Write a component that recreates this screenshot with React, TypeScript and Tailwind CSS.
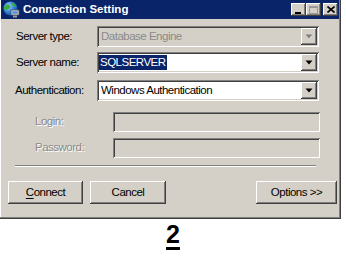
import React from "react";

// classic 3D bevels
const sunken =
  "shadow-[inset_1px_1px_#808080,inset_-1px_-1px_#ffffff,inset_2px_2px_#404040,inset_-2px_-2px_#d4d0c8]";
const raised =
  "shadow-[inset_-1px_-1px_#404040,inset_1px_1px_#ffffff,inset_-2px_-2px_#808080,inset_2px_2px_#d4d0c8]";

function DropButton({ disabled }: { disabled?: boolean }) {
  return (
    <div className={`w-[16px] h-[17px] mr-[2px] bg-[#d4d0c8] flex items-center justify-center ${raised}`}>
      <svg width="8" height="5" viewBox="0 0 8 5">
        {disabled && <path d="M2 2h5L4.5 4.5z" fill="#ffffff" />}
        <path d="M0.5 0.5h7L4 4.5z" fill={disabled ? "#808080" : "#000000"} />
      </svg>
    </div>
  );
}

function TitleButton({ children }: { children: React.ReactNode }) {
  return (
    <div className={`w-[15px] h-[13px] bg-[#d4d0c8] flex items-center justify-center ${raised}`}>
      {children}
    </div>
  );
}

function Globe() {
  return (
    <svg width="17" height="17" viewBox="0 0 17 17">
      <defs>
        <radialGradient id="g" cx="0.35" cy="0.35" r="0.7">
          <stop offset="0" stopColor="#9fd4ff" />
          <stop offset="0.6" stopColor="#2f7fd8" />
          <stop offset="1" stopColor="#164c9e" />
        </radialGradient>
      </defs>
      <circle cx="7.5" cy="7.5" r="7" fill="url(#g)" />
      <path d="M3 4c2-1 3 0 4 1s-1 3-2 3-2 1-2 3c-1-1-2-3-2-4s1-2 2-3z" fill="#3fae3a" />
      <path d="M9 2c2 0 4 2 4 4-1 0-2-1-3-1s-1-2-1-3z" fill="#3fae3a" />
      <rect x="8" y="9" width="8" height="5" fill="#d8d8d8" stroke="#505050" strokeWidth="0.8" />
      <rect x="9.2" y="10.2" width="5.6" height="2.6" fill="#5a8fd6" />
      <rect x="10" y="14.5" width="4" height="2" fill="#9a9a9a" />
    </svg>
  );
}

export default function App() {
  return (
    <div className="w-[346px] h-[266px] bg-white overflow-hidden font-['Liberation_Sans',sans-serif] text-[11.5px] tracking-[-0.5px] text-black">
      <div className="w-[341px] h-[219px] bg-[#d4d0c8] flex flex-col pl-[1px] pr-[2px] shadow-[inset_-1px_-1px_#404040,inset_-2px_-2px_#808080,inset_1px_0_#ffffff]">
        {/* title bar */}
        <div className="h-[19px] bg-[#0a246a] flex items-center pl-[2px] pr-[1px]">
          <Globe />
          <span className="ml-[3px] text-white font-bold text-[11.5px] tracking-normal leading-none">
            Connection Setting
          </span>
          <div className="ml-auto flex">
            <TitleButton>
              <div className="w-[6px] h-[2px] bg-black mt-[6px] -ml-[1px]" />
            </TitleButton>
            <TitleButton>
              <div className="w-[9px] h-[8px] border border-[#808080] border-t-2 opacity-70" />
            </TitleButton>
            <div className="ml-[2px]">
              <TitleButton>
                <svg width="8" height="7" viewBox="0 0 8 7">
                  <path d="M0.5 0.5l7 6M7.5 0.5l-7 6" stroke="#000" strokeWidth="1.6" />
                </svg>
              </TitleButton>
            </div>
          </div>
        </div>

        {/* server type */}
        <div className="flex items-center mt-[7px]">
          <div className="w-[81px] ml-[15px]">Server type:</div>
          <div className={`w-[222px] h-[21px] bg-[#d4d0c8] flex items-center ${sunken}`}>
            <span className="pl-[4px] text-[#8a8a8a]">Database Engine</span>
            <div className="ml-auto">
              <DropButton disabled />
            </div>
          </div>
        </div>

        {/* server name */}
        <div className="flex items-center mt-[5px]">
          <div className="w-[81px] ml-[15px]">Server name:</div>
          <div className={`w-[222px] h-[21px] bg-white flex items-center ${sunken}`}>
            <span className="ml-[2px] px-[1px] bg-[#0a246a] text-white leading-[15px]">SQLSERVER</span>
            <div className="ml-auto">
              <DropButton />
            </div>
          </div>
        </div>

        {/* authentication */}
        <div className="flex items-center mt-[7px]">
          <div className="w-[82px] ml-[14px]">Authentication:</div>
          <div className={`w-[222px] h-[21px] bg-white flex items-center ${sunken}`}>
            <span className="pl-[4px]">Windows Authentication</span>
            <div className="ml-auto">
              <DropButton />
            </div>
          </div>
        </div>

        {/* login */}
        <div className="flex items-center mt-[11px]">
          <div className="w-[78px] ml-[34px] text-[#8a8a8a] [text-shadow:1px_1px_0_#ffffff]">Login:</div>
          <div className={`w-[207px] h-[20px] bg-[#d4d0c8] ${sunken}`} />
        </div>

        {/* password */}
        <div className="flex items-center mt-[6px]">
          <div className="w-[78px] ml-[34px] text-[#8a8a8a] [text-shadow:1px_1px_0_#ffffff]">Password:</div>
          <div className={`w-[207px] h-[20px] bg-[#d4d0c8] ${sunken}`} />
        </div>

        {/* separator */}
        <div className="mt-[7px] ml-[14px] w-[301px] border-t border-b border-t-[#808080] border-b-white" />

        {/* buttons */}
        <div className="flex mt-[14px]">
          <button className={`ml-[7px] w-[75px] h-[23px] bg-[#d4d0c8] ${raised}`}>
            <span className="underline underline-offset-2">C</span>onnect
          </button>
          <button className={`ml-[7px] w-[76px] h-[23px] bg-[#d4d0c8] ${raised}`}>Cancel</button>
          <button className={`ml-auto mr-[2px] w-[81px] h-[23px] bg-[#d4d0c8] ${raised}`}>Options &gt;&gt;</button>
        </div>
      </div>

      <div className="mt-[3px] text-center font-bold text-[25px] tracking-normal leading-[24px]">
        <span className="underline decoration-[3px] underline-offset-[4px]">2</span>
      </div>
    </div>
  );
}
